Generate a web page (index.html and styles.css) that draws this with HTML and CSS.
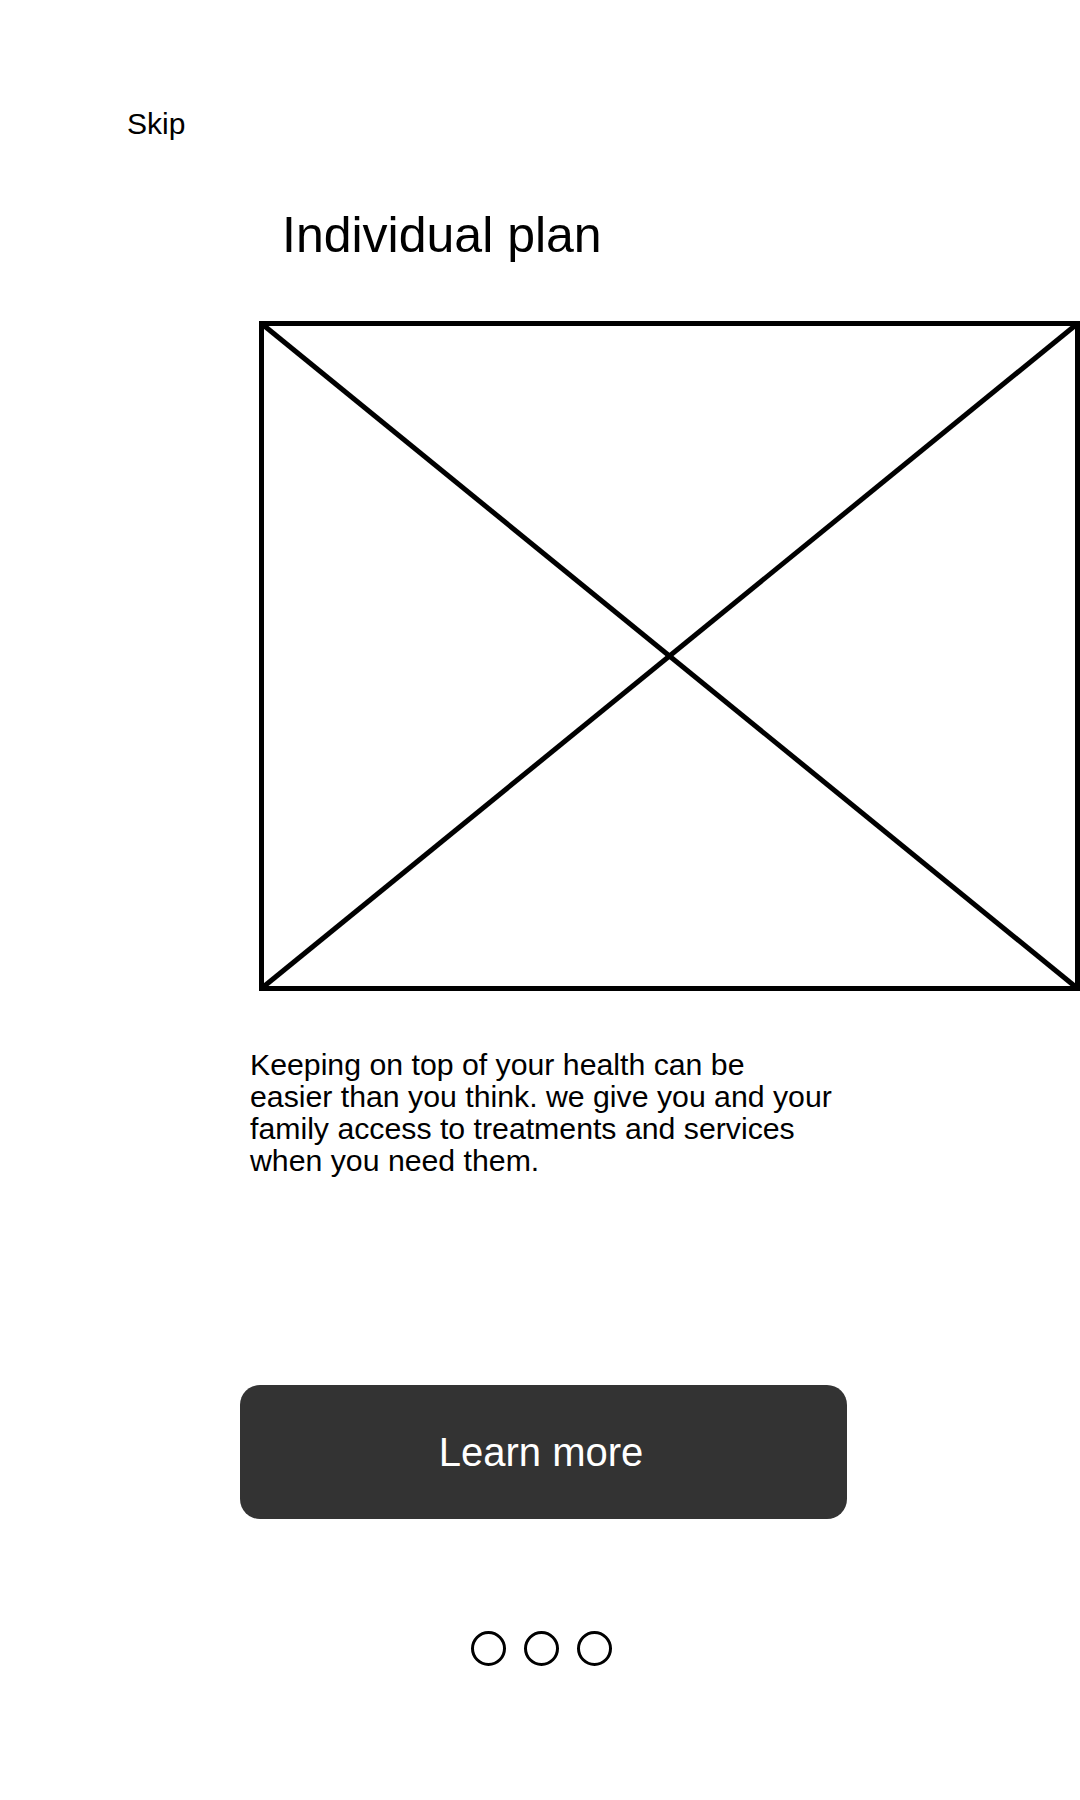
FILE: index.html
```html
<!DOCTYPE html>
<html lang="en">
<head>
    <meta charset="UTF-8">
    <meta name="viewport" content="width=device-width, initial-scale=1.0">
    <title>Individual plan</title>
    <link rel="stylesheet" href="styles.css">
</head>
<body>
    <div class="onboarding">
        <a class="skip-link" href="#">Skip</a>

        <h1 class="plan-title">Individual plan</h1>

        <div class="image-placeholder">
            <svg width="821" height="670" viewBox="0 0 821 670">
                <rect x="2.5" y="2.5" width="816" height="665" fill="none" stroke="#000" stroke-width="5"/>
                <line x1="3" y1="3" x2="818" y2="667" stroke="#000" stroke-width="5"/>
                <line x1="818" y1="3" x2="3" y2="667" stroke="#000" stroke-width="5"/>
            </svg>
        </div>

        <p class="plan-text">
            Keeping on top of your health can be<br>
            easier than you think. we give you and your<br>
            family access to treatments and services<br>
            when you need them.
        </p>

        <button class="learn-btn">Learn more</button>

        <div class="pager-dots">
            <span class="dot"></span>
            <span class="dot"></span>
            <span class="dot"></span>
        </div>
    </div>
</body>
</html>
```

FILE: styles.css
```css
body {
    margin: 0;
    background: #fff;
    color: #000;
    font-family: 'Liberation Sans', Arial, sans-serif;
}

.onboarding {
    width: 1080px;
    padding-top: 108px;
    padding-bottom: 120px;
}

.skip-link {
    display: block;
    margin-left: 127px;
    width: max-content;
    font-size: 30px;
    line-height: 32px;
    color: #000;
    text-decoration: none;
}

.plan-title {
    margin: 67px 0 0 282px;
    font-size: 50px;
    font-weight: normal;
    line-height: 56px;
}

.image-placeholder {
    margin: 58px 0 0 259px;
    width: 821px;
    height: 670px;
}

.image-placeholder svg {
    display: block;
}

.plan-text {
    margin: 58px 0 0 250px;
    font-size: 30.25px;
    line-height: 32px;
}

.learn-btn {
    display: flex;
    align-items: center;
    justify-content: center;
    margin: 208px 0 0 240px;
    width: 607px;
    height: 134px;
    padding: 0 5px 0 0;
    border: none;
    border-radius: 20px;
    background: #333;
    color: #fff;
    font-family: inherit;
    font-size: 40px;
    cursor: pointer;
}

.pager-dots {
    display: flex;
    justify-content: center;
    gap: 18px;
    margin-top: 112px;
    padding-left: 2px;
}

.dot {
    width: 35px;
    height: 35px;
    box-sizing: border-box;
    border: 3px solid #000;
    border-radius: 50%;
}
```
